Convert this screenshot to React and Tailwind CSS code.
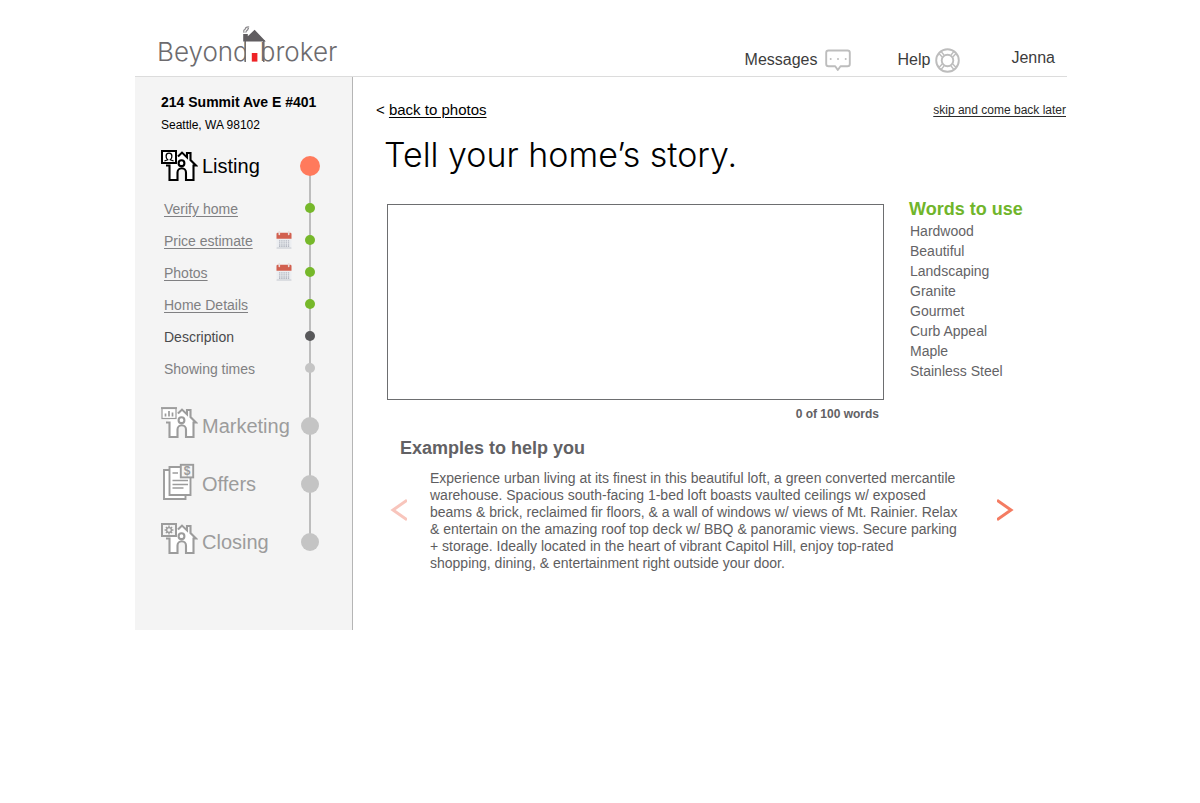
import React, { useState } from "react";

const HOUSE =
  "M17 6.5 L21 2.6 L26 7.4 V3 H29.5 V10 L35 15.5 H32.5 V30 H25 V22.5 a4.25 4.25 0 0 0 -8.5 0 V30 H8.5 V15.5 H5";

function House() {
  return (
    <g strokeWidth="2.1">
      <path d={HOUSE} fill="white" />
      <circle cx="20.5" cy="13.2" r="2.9" fill="white" />
    </g>
  );
}

function IconFrame({ children, className }) {
  return (
    <svg
      viewBox="0 0 37 38"
      fill="none"
      stroke="currentColor"
      strokeWidth="2"
      aria-hidden="true"
      className={`h-[38px] w-[37px] shrink-0 ${className || ""}`}
    >
      {children}
    </svg>
  );
}

function ListingIcon() {
  return (
    <IconFrame>
      <g transform="translate(0 3)">
        <House />
        <rect x="1" y="1" width="14" height="12" fill="white" />
        <path
          d="M3.4 11 L6.6 9.8 C4.6 8 4.2 3.2 8 3.2 C11.8 3.2 11.4 8 9.4 9.8 L12.6 11"
          strokeWidth="1.3"
        />
      </g>
    </IconFrame>
  );
}

function MarketingIcon() {
  return (
    <IconFrame className="mb-1.5">
      <g transform="translate(0 3)">
        <House />
        <rect x="1" y="1.5" width="14" height="10" fill="white" strokeWidth="1.2" />
        <path d="M0 1 H16" strokeWidth="1.8" />
        <path d="M4.5 9.5 V6.5 M8 9.5 V4 M11.5 9.5 V5.5" strokeWidth="1.7" />
      </g>
    </IconFrame>
  );
}

function OffersIcon() {
  return (
    <IconFrame className="mb-1">
      <path d="M8 7 H3 V36 H24.5 V32" fill="white" strokeWidth="1.9" />
      <path d="M8.5 4 H29.5 V32 H8.5 Z" fill="white" strokeWidth="1.9" />
      <path d="M11.5 10 H17 M11.5 17.5 H27 M11.5 21.5 H27 M11.5 25 H22.5" strokeWidth="1.5" />
      <rect x="19.8" y="1.8" width="12.4" height="12.6" fill="#f4f4f4" strokeWidth="1.9" />
      <text
        x="26"
        y="12.2"
        textAnchor="middle"
        fontSize="12"
        fontWeight="bold"
        fontFamily="Liberation Sans, sans-serif"
        fill="currentColor"
        stroke="none"
      >
        $
      </text>
    </IconFrame>
  );
}

function ClosingIcon() {
  return (
    <IconFrame className="mb-1.5">
      <g transform="translate(0 3)">
        <House />
        <rect x="1" y="1" width="14" height="12" fill="#f4f4f4" />
        <circle cx="8" cy="7" r="2.4" strokeWidth="1.4" />
        <path
          d="M8 2.6 V4.6 M8 9.4 V11.4 M3.6 7 H5.6 M10.4 7 H12.4 M4.9 3.9 L6.3 5.3 M9.7 8.7 L11.1 10.1 M11.1 3.9 L9.7 5.3 M6.3 8.7 L4.9 10.1"
          strokeWidth="1.4"
        />
      </g>
    </IconFrame>
  );
}

function CalendarIcon() {
  return (
    <svg viewBox="0 0 16 18" aria-hidden="true" className="h-[18px] w-4 shrink-0">
      <rect x="0.5" y="2" width="15" height="15.5" rx="1" fill="#eceef1" />
      <rect x="0.5" y="16.5" width="15" height="1" rx="0.5" fill="#c6c9d0" />
      <path d="M0.5 3 a1.2 1.2 0 0 1 1.2 -1.2 H14.3 a1.2 1.2 0 0 1 1.2 1.2 V7.8 H0.5 Z" fill="#d2604f" />
      <path d="M3.3 0.6 V3.4 M12.7 0.6 V3.4" stroke="#eadedc" strokeWidth="1.6" strokeLinecap="round" />
      <path
        d="M3 9.8 H13.4 M3 11.8 H13.4 M3 13.8 H13.4 M3 15.4 H13.4"
        stroke="#b3b7c1"
        strokeWidth="1.2"
        strokeDasharray="1.4 0.8"
      />
    </svg>
  );
}

function MessageIcon() {
  return (
    <svg viewBox="0 0 26 23" fill="none" stroke="#bdbdbd" strokeWidth="1.9" aria-hidden="true" className="h-[23px] w-[26px]">
      <path
        d="M3.5 1.5 H22.5 a2.3 2.3 0 0 1 2.3 2.3 V15 a2.3 2.3 0 0 1 -2.3 2.3 H15.5 L12.8 21 L10.2 17.3 H3.5 A2.3 2.3 0 0 1 1.2 15 V3.8 a2.3 2.3 0 0 1 2.3 -2.3 Z"
        strokeLinejoin="round"
      />
      <g fill="#bdbdbd" stroke="none">
        <circle cx="5.7" cy="10" r="1" />
        <circle cx="13" cy="10" r="1" />
        <circle cx="20.7" cy="10" r="1" />
      </g>
    </svg>
  );
}

function HelpIcon() {
  return (
    <svg viewBox="0 0 25 25" fill="none" stroke="#bdbdbd" strokeWidth="1.9" aria-hidden="true" className="h-[25px] w-[25px]">
      <circle cx="12.5" cy="12.5" r="11.3" />
      <circle cx="12.5" cy="12.5" r="5.8" />
      <path
        d="M7.2 9 L4 5.6 M9 7 L6 3.4 M16 7 L19 3.4 M17.8 9 L21 5.6 M7.2 16 L4 19.4 M9 18 L6 21.6 M16 18 L19 21.6 M17.8 16 L21 19.4"
        strokeWidth="1.4"
      />
    </svg>
  );
}

function Logo() {
  return (
    <a
      href="#home"
      aria-label="Beyond broker"
      className="flex items-end font-['Inter',sans-serif] text-[26px] leading-8 font-light text-[#6d6b6e]"
    >
      <span>Beyond</span>
      <svg viewBox="0 0 23 38" aria-hidden="true" className="-mx-1.5 mb-1 h-[38px] w-[23px]">
        <path d="M2.2 14 H20.8 V36 H2.2 Z" fill="white" />
        <path d="M2.2 14 V36 M20.8 14 V36" stroke="#6d6b6e" strokeWidth="1.5" />
        <path d="M0.2 15.4 V8 H4.8 V10.2 L11.6 3.8 L22.8 15.4 Z" fill="#605d60" />
        <path
          d="M1.2 6.8 C0.2 4.6 1.2 3.6 2.2 3.2 C2.4 1.4 4 0.8 6.2 1 M3 6.6 C2.6 4.8 4 4.4 4.8 3.8 C4.6 2.8 5.2 2.4 6 2.4"
          fill="none"
          stroke="#8d8b8e"
          strokeWidth="1.2"
        />
        <rect x="8.8" y="27" width="5.6" height="8.6" fill="#ee2327" />
      </svg>
      <span>broker</span>
    </a>
  );
}

const DOTS = {
  active: "size-5 bg-[#ff7a5c]",
  stage: "size-[18px] bg-[#c4c4c4]",
  done: "size-2.5 bg-[#76b82a]",
  current: "size-2.5 bg-[#58585a]",
  todo: "size-2.5 bg-[#c4c4c4]",
};

function Dot({ kind }) {
  return (
    <span className="flex w-5 shrink-0 justify-center">
      <span className={`rounded-full ${DOTS[kind]}`} />
    </span>
  );
}

const STEPS = [
  { label: "Verify home", kind: "done" },
  { label: "Price estimate", kind: "done", calendar: true },
  { label: "Photos", kind: "done", calendar: true },
  { label: "Home Details", kind: "done" },
  { label: "Description", kind: "current" },
  { label: "Showing times", kind: "todo" },
];

const STEP_TEXT = {
  done: "text-[#808082] underline underline-offset-2",
  current: "text-[#4a4a4c]",
  todo: "text-[#808082]",
};

const STAGES = [
  { label: "Marketing", Icon: MarketingIcon },
  { label: "Offers", Icon: OffersIcon },
  { label: "Closing", Icon: ClosingIcon },
];

function Sidebar() {
  return (
    <aside className="w-[218px] shrink-0 border-r border-[#b5b5b5] bg-[#f4f4f4] pt-4 pr-8 pb-[59px] pl-[26px]">
      <p className="text-sm leading-[18px] font-bold whitespace-nowrap text-black">214 Summit Ave E #401</p>
      <p className="mt-1.5 text-xs leading-4 text-black">Seattle, WA 98102</p>
      <nav aria-label="Progress" className="relative mt-[7px]">
        <span className="absolute top-7 right-[9px] bottom-7 w-0.5 bg-[#bdbdbd]" />
        <div className="relative flex h-[52px] items-center justify-between">
          <a href="#listing" className="flex items-center gap-1 text-xl text-black">
            <ListingIcon />
            Listing
          </a>
          <Dot kind="active" />
        </div>
        <ul className="relative pl-[3px]">
          {STEPS.map(({ label, kind, calendar }) => (
            <li key={label} className="flex h-8 items-center">
              <a href="#step" className={`flex-1 pt-0.5 text-sm ${STEP_TEXT[kind]}`}>
                {label}
              </a>
              {calendar && (
                <span className="mr-2">
                  <CalendarIcon />
                </span>
              )}
              <Dot kind={kind} />
            </li>
          ))}
        </ul>
        <ul className="relative mt-[13px]">
          {STAGES.map(({ label, Icon }) => (
            <li key={label} className="flex h-[58px] items-center justify-between">
              <a href="#stage" className="flex items-center gap-1 text-xl text-[#9c9c9c]">
                <Icon />
                {label}
              </a>
              <Dot kind="stage" />
            </li>
          ))}
        </ul>
      </nav>
    </aside>
  );
}

const WORDS = [
  "Hardwood",
  "Beautiful",
  "Landscaping",
  "Granite",
  "Gourmet",
  "Curb Appeal",
  "Maple",
  "Stainless Steel",
];

function Story() {
  const [story, setStory] = useState("");
  const count = story.trim() ? story.trim().split(/\s+/).length : 0;
  return (
    <section className="flex items-start gap-[25px]">
      <div className="flex-1 pt-[7px]">
        <textarea
          aria-labelledby="story-title"
          value={story}
          onChange={(e) => setStory(e.target.value)}
          className="block h-[196px] w-full resize-none border border-[#6d6e70] bg-white p-3 text-sm outline-none"
        />
        <p className="mt-1.5 pr-[5px] text-right text-xs leading-4 font-bold text-[#626164]">{count} of 100 words</p>
      </div>
      <div className="w-[158px]">
        <h2 className="text-lg leading-6 font-bold text-[#70b52b]">Words to use</h2>
        <ul className="pl-px text-sm leading-5 text-[#646366]">
          {WORDS.map((word) => (
            <li key={word}>{word}</li>
          ))}
        </ul>
      </div>
    </section>
  );
}

const EXAMPLE = [
  "Experience urban living at its finest in this beautiful loft, a green converted mercantile",
  "warehouse. Spacious south-facing 1-bed loft boasts vaulted ceilings w/ exposed",
  "beams & brick, reclaimed fir floors, & a wall of windows w/ views of Mt. Rainier. Relax",
  "& entertain on the amazing roof top deck w/ BBQ & panoramic views. Secure parking",
  "+ storage. Ideally located in the heart of vibrant Capitol Hill, enjoy top-rated",
  "shopping, dining, & entertainment right outside your door.",
].join("\n");

function Examples() {
  return (
    <section className="mt-3.5">
      <h2 className="pl-[13px] text-lg leading-6 font-bold text-[#626164]">Examples to help you</h2>
      <div className="mt-2.5 flex items-start pr-[53px] pl-[3px]">
        <button type="button" aria-label="Previous example" className="mt-7 shrink-0 text-[#f8c5bc]">
          <svg viewBox="0 0 17 24" fill="none" stroke="currentColor" strokeWidth="3" className="h-6 w-[17px]">
            <path d="M17 2.2 L3 12 L17 21.8" />
          </svg>
        </button>
        <p className="ml-[23px] flex-1 text-sm leading-[17px] whitespace-pre-line text-[#5e5d60]">{EXAMPLE}</p>
        <button type="button" aria-label="Next example" className="mt-7 ml-5 shrink-0 text-[#f47c62]">
          <svg viewBox="0 0 17 24" fill="none" stroke="currentColor" strokeWidth="3" className="h-6 w-[17px]">
            <path d="M0 2.2 L14 12 L0 21.8" />
          </svg>
        </button>
      </div>
    </section>
  );
}

export default function App() {
  return (
    <div className="min-h-screen bg-white pl-0.5 font-['Liberation_Sans',Arial,sans-serif]">
      <div className="mx-auto max-w-[932px]">
        <header className="flex h-[77px] items-end justify-between border-b border-[#dcdcdc] pr-3 pl-[22px]">
          <div className="pb-2">
            <Logo />
          </div>
          <nav aria-label="Account" className="flex items-center pb-[3px] text-base text-[#3c3c3c]">
            <a href="#messages" className="flex items-center gap-[7px] pt-px">
              Messages <MessageIcon />
            </a>
            <a href="#help" className="ml-[47px] flex items-center gap-[5px] pt-px">
              Help <HelpIcon />
            </a>
            <a href="#account" className="ml-[51px] pb-[3px]">
              Jenna
            </a>
          </nav>
        </header>
        <div className="flex items-stretch">
          <Sidebar />
          <main className="flex-1 pl-[23px]">
            <div className="flex items-center justify-between pt-6 text-black">
              <span className="text-[15px] leading-[18px]">
                &lt;{" "}
                <a href="#photos" className="underline underline-offset-2">
                  back to photos
                </a>
              </span>
              <a href="#later" className="pr-px text-xs leading-[18px] text-[#2a2a2a] underline underline-offset-2">
                skip and come back later
              </a>
            </div>
            <h1
              id="story-title"
              className="mt-4 mb-[22px] pl-2 font-['Inter',sans-serif] text-[34px] leading-10 font-light text-black"
            >
              Tell your home’s story.
            </h1>
            <div className="pl-[11px]">
              <Story />
              <Examples />
            </div>
          </main>
        </div>
      </div>
    </div>
  );
}
